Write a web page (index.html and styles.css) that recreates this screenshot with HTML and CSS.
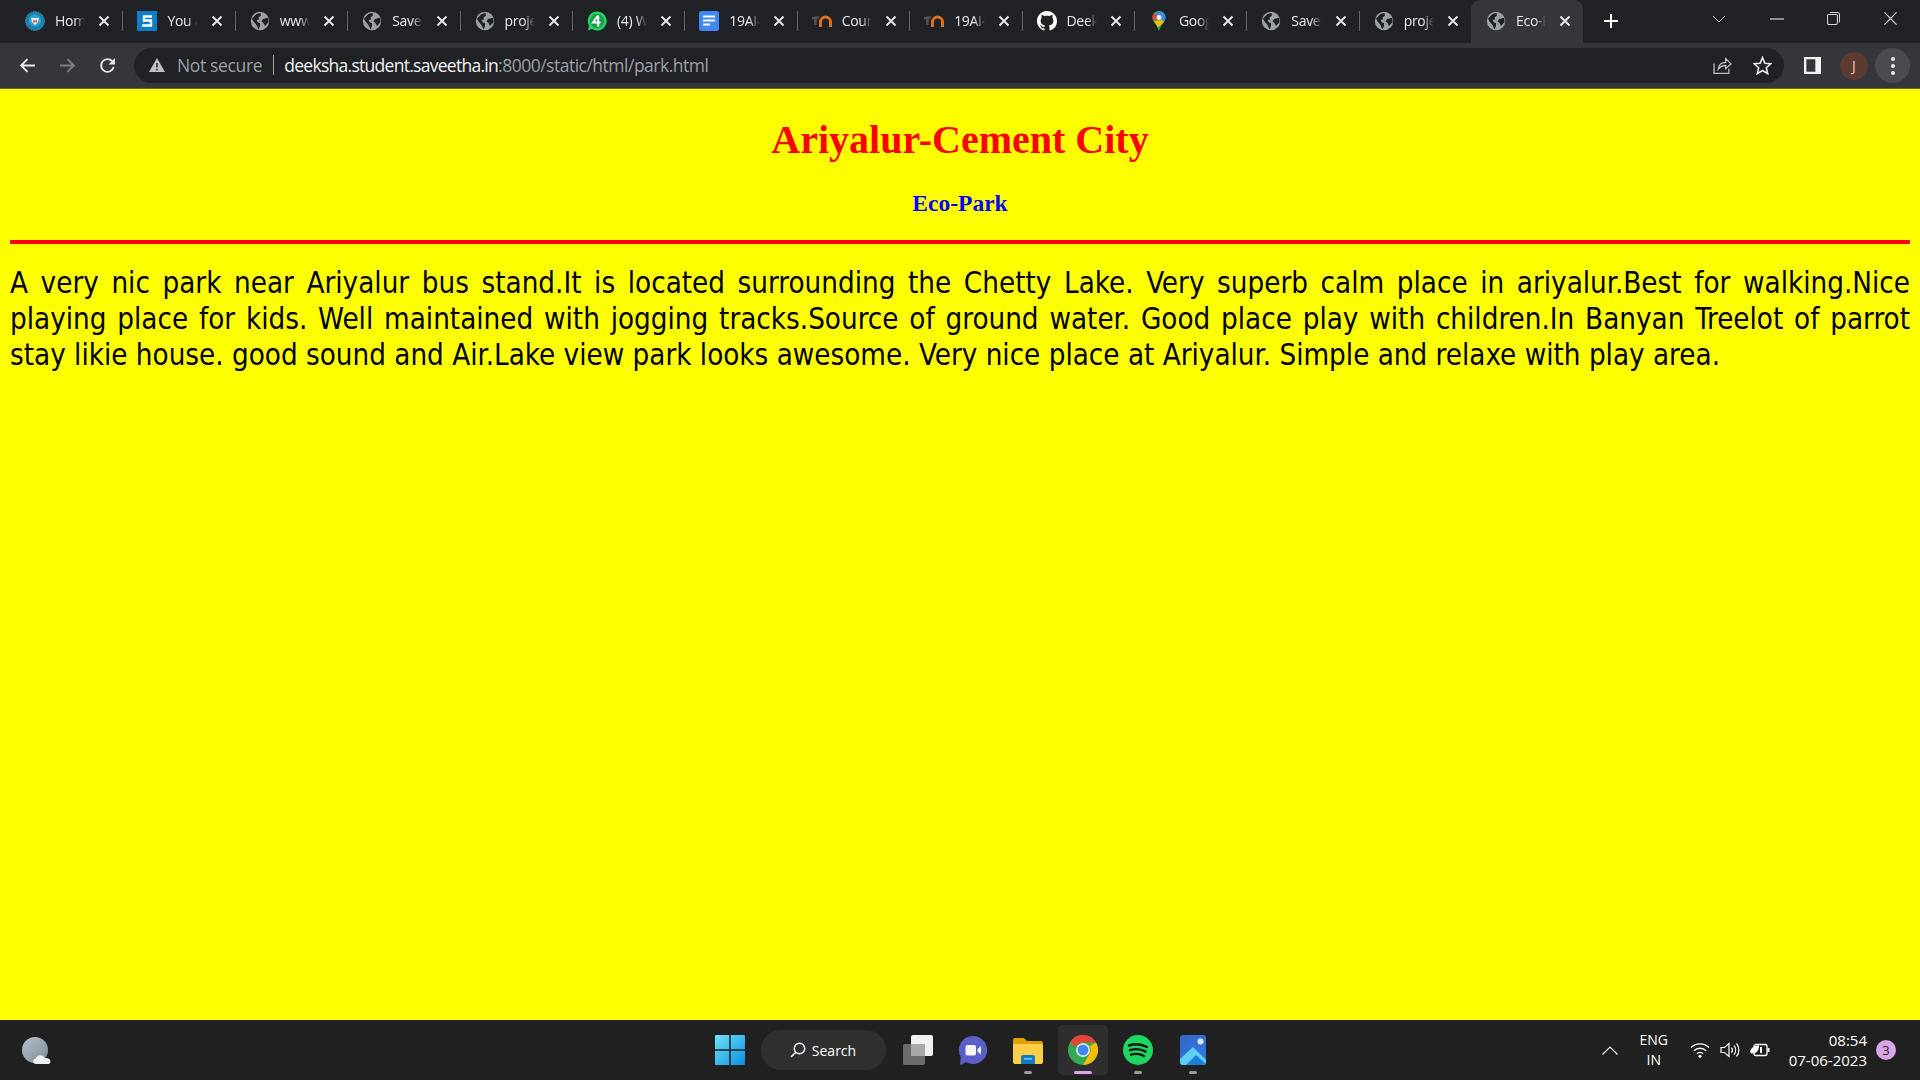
FILE: index.html
```html
<!DOCTYPE html>
<html lang="en">
<head>
<meta charset="utf-8">
<title>Eco-Park</title>
<link rel="stylesheet" href="styles.css">
</head>
<body>
<svg class="defs" width="0" height="0">
  <symbol id="globe" viewBox="0 0 20 20">
    <circle cx="10" cy="10" r="9.2" fill="#9aa0a6"/>
    <path d="M2 7.5 L6.5 3 L10.5 2 L11 4.5 L8.5 6.5 L9 8.5 L6.5 9 L8 11.5 L10 12 L10 15 L8.5 18.5 L6.5 14 L3.5 10.5Z" fill="#202124"/>
    <path d="M13 8 L18 6.8 L18.6 11 L15 15 L13.5 12 L11.5 10.5Z" fill="#202124"/>
  </symbol>
  <symbol id="close" viewBox="0 0 12 12">
    <path d="M1.5 1.5 L10.5 10.5 M10.5 1.5 L1.5 10.5" stroke="#e8eaed" stroke-width="1.9" fill="none"/>
  </symbol>
  <symbol id="moodle" viewBox="0 0 20 20">
    <path d="M8.5 16 V11 A5 5 0 0 1 18.5 11 V16" fill="none" stroke="#d9731a" stroke-width="3"/>
    <path d="M0 7.5 L7 6 M3.5 7 V14" fill="none" stroke="#55504c" stroke-width="2.6"/>
  </symbol>
</svg>
<header class="chrome">
  <div class="tabstrip">
    <div class="tab">
      <svg class="fav" viewBox="0 0 20 20"><circle cx="10" cy="10" r="9.5" fill="#1d7fae" stroke="#3a8f95" stroke-dasharray="1.5 1"/><circle cx="10" cy="9.5" r="6" fill="#2fa3d9"/><path d="M6 7 H14 L13 11 L10 14 L7 11Z" fill="#e6eef2"/><path d="M8 9 H12 V11.5 H8Z" fill="#e0734a"/></svg>
      <span class="title">Home</span><svg class="x"><use href="#close"/></svg>
    </div>
    <div class="tab">
      <svg class="fav" viewBox="0 0 20 20"><rect width="20" height="20" fill="#0f7ec8"/><path d="M15 5.5 H7 V9.5 H14 V14.5 H5" fill="none" stroke="#fff" stroke-width="2.4"/></svg>
      <span class="title">You are</span><svg class="x"><use href="#close"/></svg>
    </div>
    <div class="tab"><svg class="fav"><use href="#globe"/></svg><span class="title">www.</span><svg class="x"><use href="#close"/></svg></div>
    <div class="tab"><svg class="fav"><use href="#globe"/></svg><span class="title">Saved</span><svg class="x"><use href="#close"/></svg></div>
    <div class="tab"><svg class="fav"><use href="#globe"/></svg><span class="title">project</span><svg class="x"><use href="#close"/></svg></div>
    <div class="tab">
      <svg class="fav" viewBox="0 0 20 20"><path d="M10 .5 A9.5 9.5 0 1 1 5 18 L.8 19.3 L2.2 15 A9.5 9.5 0 0 1 10 .5Z" fill="#25d366"/><circle cx="10" cy="10" r="7.2" fill="#1a9e4a"/><path d="M11 4.5 L6 11.5 H13.5 M11.2 4.5 V15.5" fill="none" stroke="#fff" stroke-width="2"/></svg>
      <span class="title">(4) WhatsApp</span><svg class="x"><use href="#close"/></svg>
    </div>
    <div class="tab">
      <svg class="fav" viewBox="0 0 20 20"><rect width="20" height="20" rx="2.5" fill="#4285f4"/><path d="M4 5.5 H16 M4 9.5 H16 M4 13.5 H11" stroke="#fff" stroke-width="2"/></svg>
      <span class="title">19AI4</span><svg class="x"><use href="#close"/></svg>
    </div>
    <div class="tab"><svg class="fav"><use href="#moodle"/></svg><span class="title">Course</span><svg class="x"><use href="#close"/></svg></div>
    <div class="tab"><svg class="fav"><use href="#moodle"/></svg><span class="title">19AI4</span><svg class="x"><use href="#close"/></svg></div>
    <div class="tab">
      <svg class="fav" viewBox="0 0 16 16"><path fill="#fff" d="M8 0C3.58 0 0 3.58 0 8c0 3.54 2.29 6.53 5.47 7.59.4.07.55-.17.55-.38 0-.19-.01-.82-.01-1.49-2.01.37-2.53-.49-2.69-.94-.09-.23-.48-.94-.82-1.13-.28-.15-.68-.52-.01-.53.63-.01 1.08.58 1.23.82.72 1.21 1.87.87 2.33.66.07-.52.28-.87.51-1.07-1.78-.2-3.64-.89-3.64-3.95 0-.87.31-1.59.82-2.15-.08-.2-.36-1.02.08-2.12 0 0 .67-.21 2.2.82.64-.18 1.32-.27 2-.27s1.36.09 2 .27c1.53-1.04 2.2-.82 2.2-.82.44 1.1.16 1.92.08 2.12.51.56.82 1.27.82 2.15 0 3.07-1.87 3.75-3.65 3.95.29.25.54.73.54 1.48 0 1.07-.01 1.93-.01 2.2 0 .21.15.46.55.38A8.01 8.01 0 0 0 16 8c0-4.42-3.58-8-8-8z"/></svg>
      <span class="title">Deeksha</span><svg class="x"><use href="#close"/></svg>
    </div>
    <div class="tab">
      <svg class="fav" viewBox="0 0 20 20"><path d="M10 0 C5.8 0 3.5 3 3.5 6.5 C3.5 10.5 8 13.5 10 20 C12 13.5 16.5 10.5 16.5 6.5 C16.5 3 14.2 0 10 0Z" fill="#34a853"/><path d="M5 2 L15 11 C16 9.5 16.5 8 16.5 6.5 C16.5 3.5 14.5 1.5 13 .8Z" fill="#4285f4"/><path d="M5 2 C3.8 3.2 3.5 5 3.5 6.5 C3.5 8 4 9 4.7 10L9 5.5Z" fill="#ea4335"/><path d="M4.7 10 C6 12 8 14 8.8 16.5 L15 11 L13 9Z" fill="#fbbc04"/><circle cx="10" cy="6.5" r="2.4" fill="#fff"/></svg>
      <span class="title">Google</span><svg class="x"><use href="#close"/></svg>
    </div>
    <div class="tab"><svg class="fav"><use href="#globe"/></svg><span class="title">Saved</span><svg class="x"><use href="#close"/></svg></div>
    <div class="tab"><svg class="fav"><use href="#globe"/></svg><span class="title">project</span><svg class="x"><use href="#close"/></svg></div>
    <div class="tab active"><svg class="fav"><use href="#globe"/></svg><span class="title">Eco-Park</span><svg class="x"><use href="#close"/></svg></div>
    <svg class="newtab" viewBox="0 0 16 16"><path d="M8 1 V15 M1 8 H15" stroke="#fff" stroke-width="2"/></svg>
    <div class="wincontrols">
      <svg class="chev" viewBox="0 0 14 8"><path d="M1 1 L7 7 L13 1" fill="none" stroke="#bdc1c6" stroke-width="1"/></svg>
      <svg class="wbtn" viewBox="0 0 14 14"><path d="M0 7 H14" stroke="#d5d7da" stroke-width="1.2"/></svg>
      <svg class="wbtn" viewBox="0 0 14 14"><rect x=".6" y="2.6" width="10.6" height="10.8" rx="1.5" fill="none" stroke="#d5d7da" stroke-width="1.1"/><path d="M3 .6 H11.5 A2 2 0 0 1 13.4 2.6 V11" fill="none" stroke="#d5d7da" stroke-width="1.1"/></svg>
      <svg class="wbtn" viewBox="0 0 14 14"><path d="M.5 .5 L13.5 13.5 M13.5 .5 L.5 13.5" stroke="#e8eaed" stroke-width="1.1"/></svg>
    </div>
  </div>
  <div class="toolbar">
    <svg class="nav" viewBox="0 0 16 16"><path d="M15 8 H2 M8 2 L2 8 L8 14" fill="none" stroke="#e8eaed" stroke-width="1.8"/></svg>
    <svg class="nav" viewBox="0 0 16 16"><path d="M1 8 H14 M8 2 L14 8 L8 14" fill="none" stroke="#7d8085" stroke-width="1.8"/></svg>
    <svg class="nav" viewBox="0 0 16 16"><path d="M13.8 9.5 A6 6 0 1 1 12.3 3.8" fill="none" stroke="#e8eaed" stroke-width="1.8"/><path d="M15 1 V7 H9Z" fill="#e8eaed"/></svg>
    <div class="omnibox">
      <svg class="warn" viewBox="0 0 16 14"><path d="M8 0 L16 14 H0Z" fill="#bdc1c6"/><path d="M8 5 V9.5 M8 10.8 V12.4" stroke="#202124" stroke-width="1.4"/></svg>
      <span class="notsecure">Not secure</span>
      <span class="divider"></span>
      <span class="url"><span class="host">deeksha.student.saveetha.in</span>:8000/static/html/park.html</span>
      <svg class="omni-ico share" viewBox="0 0 18 18"><path d="M1 7 V16.5 H15 V12 M5 12.5 C5.5 8.5 8 6 12 6 V2.5 L17 7.5 L12 12 V9 C9 9 7 10 5 12.5Z" fill="none" stroke="#bdc1c6" stroke-width="1.2"/></svg>
      <svg class="omni-ico star" viewBox="0 0 18 18"><path d="M9 1.5 L11.2 6.8 L17 7.3 L12.6 11.1 L13.9 16.7 L9 13.7 L4.1 16.7 L5.4 11.1 L1 7.3 L6.8 6.8Z" fill="none" stroke="#e8eaed" stroke-width="1.5"/></svg>
    </div>
    <svg class="sidepanel" viewBox="0 0 18 18"><path fill-rule="evenodd" d="M0 0 H18 V18 H0Z M2.5 2.5 V15.5 H12 V2.5Z" fill="#f1f3f4"/></svg>
    <span class="avatar">J</span>
    <span class="menu"><i></i><i></i><i></i></span>
  </div>
</header>

<main class="page">
  <h1 class="city">Ariyalur-Cement City</h1>
  <h2 class="park">Eco-Park</h2>
  <hr class="rule">
  <p class="review">A very nic park near Ariyalur bus stand.It is located surrounding the Chetty Lake. Very superb calm place in ariyalur.Best for walking.Nice playing place for kids. Well maintained with jogging tracks.Source of ground water. Good place play with children.In Banyan Treelot of parrot stay likie house. good sound and Air.Lake view park looks awesome. Very nice place at Ariyalur. Simple and relaxe with play area.</p>
</main>

<footer class="taskbar">
  <svg class="weather" viewBox="0 0 30 28">
    <defs><linearGradient id="moon" x1="0" y1="0" x2="1" y2="1"><stop offset="0" stop-color="#b8c2cc"/><stop offset="1" stop-color="#7f8a96"/></linearGradient></defs>
    <circle cx="13" cy="13" r="13" fill="url(#moon)"/>
    <path d="M14 27 C10.5 27 10 22 14 21.5 C14.8 17.5 21 17 22.5 21 C26 20.5 28.5 22 28.5 24.5 C28.5 26.5 27 27 25 27Z" fill="#eef1f4"/>
  </svg>
  <div class="task-center">
    <svg class="start" viewBox="0 0 28 28">
      <defs><linearGradient id="win" x1="0" y1="0" x2="1" y2="1"><stop offset="0" stop-color="#6fe3ff"/><stop offset="1" stop-color="#0a8fdc"/></linearGradient></defs>
      <path d="M0 1 A1 1 0 0 1 1 0 H13.3 V13.3 H0Z M14.7 0 H27 A1 1 0 0 1 28 1 V13.3 H14.7Z M0 14.7 H13.3 V28 H1 A1 1 0 0 1 0 27Z M14.7 14.7 H28 V27 A1 1 0 0 1 27 28 H14.7Z" fill="url(#win)"/>
    </svg>
    <div class="search">
      <svg class="glass" viewBox="0 0 16 16"><circle cx="9.5" cy="6.5" r="5.2" fill="none" stroke="#fff" stroke-width="1.4"/><path d="M5.8 10.2 L1 15" stroke="#fff" stroke-width="1.6"/></svg>
      <span>Search</span>
    </div>
    <div class="app">
      <svg class="ico" viewBox="0 0 30 30"><rect x="0" y="9" width="22" height="21" rx="2" fill="#6b6b6b"/><rect x="8" y="0" width="22" height="21" rx="2" fill="#f2f2f2"/><rect x="8" y="9" width="14" height="12" fill="#a9a9a9"/></svg>
    </div>
    <div class="app">
      <svg class="ico" viewBox="0 0 30 30"><path d="M15 1 A14 14 0 1 1 8 27 L4 29.5 C3 30 2 29.5 2.2 28 L2.8 22 A14 14 0 0 1 15 1Z" fill="#5b5fc7"/><rect x="7.5" y="10" width="10.5" height="10.5" rx="2" fill="#f4f4fb"/><path d="M19.5 14 L23 11 V19.5 L19.5 16.5Z" fill="#f4f4fb"/></svg>
    </div>
    <div class="app open">
      <svg class="ico" viewBox="0 0 30 30"><path d="M0 5 A2 2 0 0 1 2 3 H11 L14 6 H28 A2 2 0 0 1 30 8 V12 H0Z" fill="#e0a100"/><path d="M0 9 H28 A2 2 0 0 1 30 11 V27 A2 2 0 0 1 28 29 H2 A2 2 0 0 1 0 27Z" fill="#ffcf49"/><path d="M8 22 A2 2 0 0 1 10 20 H20 A2 2 0 0 1 22 22 V29 H8Z" fill="#1279c4"/><rect x="11" y="23" width="8" height="1.6" fill="#7ec8f5"/></svg>
      <span class="pip"></span>
    </div>
    <div class="app current">
      <svg class="ico" viewBox="0 0 48 48"><circle cx="24" cy="24" r="24" fill="#34a853"/><path d="M24 0 A24 24 0 0 1 44.8 12 H24 A12 12 0 0 0 13.2 19 L3.2 12 A24 24 0 0 1 24 0Z" fill="#ea4335"/><path d="M44.8 12 A24 24 0 0 1 24 48 L34.4 30 A12 12 0 0 0 34.4 18 Z" fill="#fbbc04"/><circle cx="24" cy="24" r="11" fill="#fff"/><circle cx="24" cy="24" r="8.8" fill="#4285f4"/></svg>
      <span class="pip wide"></span>
    </div>
    <div class="app open">
      <svg class="ico" viewBox="0 0 30 30"><circle cx="15" cy="15" r="15" fill="#1ed760"/><path d="M6 10.5 C12 8.5 18.5 9 24 12 M7 15.2 C12 13.5 18 14 22.5 16.6 M8 19.6 C12.5 18.3 17 18.7 21 21" fill="none" stroke="#191414" stroke-width="2.4" stroke-linecap="round"/></svg>
      <span class="pip"></span>
    </div>
    <div class="app open">
      <svg class="ico" viewBox="0 0 30 30"><defs><linearGradient id="ph" x1="0" y1="0" x2="1" y2="1"><stop offset="0" stop-color="#3566c8"/><stop offset="1" stop-color="#2a7fe0"/></linearGradient></defs><rect x="2" width="26" height="30" rx="3" fill="url(#ph)"/><path d="M2 24 L15 12 L28 25 V27 A3 3 0 0 1 25 30 H5 A3 3 0 0 1 2 27Z" fill="#5fd0f5"/><path d="M8 30 L18 20 L28 29 L26 30Z" fill="#1b7fd8"/><circle cx="22.5" cy="6.5" r="3" fill="#e9e4f5"/></svg>
      <span class="pip"></span>
    </div>
  </div>
  <div class="tray">
    <svg class="caret" viewBox="0 0 16 9"><path d="M.5 8.5 L8 1 L15.5 8.5" fill="none" stroke="#eee" stroke-width="1.2"/></svg>
    <div class="lang"><span>ENG</span><span>IN</span></div>
    <svg class="tray-ico" viewBox="0 0 20 16"><path d="M1 5.5 A13 13 0 0 1 19 5.5 M4 8.7 A8.5 8.5 0 0 1 16 8.7 M7 11.7 A4 4 0 0 1 13 11.7" fill="none" stroke="#fff" stroke-width="1.4"/><circle cx="10" cy="14.3" r="1.5" fill="#fff"/></svg>
    <svg class="tray-ico" viewBox="0 0 20 16"><path d="M1 5.5 H4.5 L9 1.5 V14.5 L4.5 10.5 H1Z" fill="none" stroke="#fff" stroke-width="1.2"/><path d="M11.5 5.5 A4 4 0 0 1 11.5 10.5 M14 3.5 A7 7 0 0 1 14 12.5 M16.5 1.5 A10 10 0 0 1 16.5 14.5" fill="none" stroke="#fff" stroke-width="1.2"/></svg>
    <svg class="tray-ico" viewBox="0 0 20 16"><rect x="4" y="2.5" width="13" height="11" rx="2" fill="none" stroke="#fff" stroke-width="1.3"/><rect x="17.5" y="6" width="2" height="4" fill="#fff"/><path d="M0 10 C1 5 5 3.5 9 3.5 C9 9 6 12 1.5 11.5Z" fill="#fff"/><rect x="10" y="5" width="2" height="6" fill="#fff"/></svg>
    <div class="clock"><span>08:54</span><span>07-06-2023</span></div>
    <span class="badge">3</span>
  </div>
</footer>
</body>
</html>
```
FILE: styles.css
```css
* { box-sizing: border-box; }
html, body { margin: 0; height: 100%; }
body { display: flex; flex-direction: column; height: 100vh; overflow: hidden; background: #ff0; }
.defs { position: absolute; }

.chrome { flex: none; height: 89px; background: #202124; font-family: "Open Sans", "Noto Sans", sans-serif; }
.tabstrip { height: 43px; padding-left: 10px; display: flex; align-items: center; }
.tab { position: relative; flex: none; width: 112.4px; height: 43px; padding: 0 12px 2px 15px; display: flex; align-items: center; color: #e8eaed; font-size: 14px; }
.tab + .tab::before { content: ""; position: absolute; left: 0; top: 11px; height: 20px; width: 1px; background: #62646a; }
.tab.active { background: #35363a; border-radius: 9px 9px 0 0; }
.tab.active::before { display: none; }
.fav { flex: none; width: 20px; height: 20px; margin-right: 10px; }
.title { flex: 1; min-width: 0; overflow: hidden; white-space: nowrap; margin-right: 13px; letter-spacing: -0.3px; -webkit-mask-image: linear-gradient(90deg, #000 65%, transparent 100%); mask-image: linear-gradient(90deg, #000 65%, transparent 100%); }
.x { flex: none; width: 12px; height: 12px; }
.newtab { flex: none; width: 16px; height: 16px; margin: 0 0 2px 20px; }
.wincontrols { margin-left: auto; display: flex; align-items: center; height: 43px; padding-bottom: 6px; }
.chev { width: 14px; height: 8px; margin-right: 44px; }
.wbtn { width: 14px; height: 14px; margin-right: 43px; }
.wbtn:nth-child(3) { width: 13px; height: 13px; margin-right: 44px; }
.wbtn:last-child { width: 13px; height: 13px; margin-right: 23px; }

.toolbar { height: 46px; background: #35363a; border-bottom: 1px solid #5f6064; display: flex; align-items: center; padding-left: 19px; }
.nav { flex: none; width: 17px; height: 17px; margin-right: 23px; }
.nav:nth-child(3) { margin-right: 18px; }
.omnibox { flex: none; width: 1650px; height: 35px; padding: 0 0 1px 15px; border-radius: 18px; background: #202124; display: flex; align-items: center; font-size: 17.5px; letter-spacing: -0.35px; }
.warn { flex: none; width: 16px; height: 14px; margin-right: 12px; }
.notsecure { color: #9aa0a6; }
.divider { width: 1px; height: 20px; background: #9aa0a6; margin: 0 10.5px; }
.url { color: #9aa0a6; flex: 1; white-space: nowrap; letter-spacing: -0.5px; }
.host { color: #f1f3f4; letter-spacing: -0.72px; }
.omni-ico { flex: none; width: 19px; height: 19px; }
.share { margin-right: 21px; }
.star { margin-right: 12px; }
.sidepanel { flex: none; width: 17px; height: 17px; margin-left: 20px; }
.avatar { flex: none; width: 28px; height: 28px; border-radius: 50%; margin-left: 19px; background: #5d3a30; color: #e8c8bb; font-size: 14px; display: flex; align-items: center; justify-content: center; }
.menu { flex: none; width: 35px; height: 35px; border-radius: 18px; margin-left: 7px; background: #4a4b4f; display: flex; flex-direction: column; align-items: center; justify-content: center; gap: 3px; }
.menu i { width: 4px; height: 4px; border-radius: 50%; background: #e8eaed; }

.page { flex: 1; min-height: 0; padding: 0 10px; background: #ff0; }
.city { margin: 28px 0 0; text-align: center; color: #f00; font: bold 40px/46px "Liberation Serif", serif; }
.park { margin: 27px 0 0; text-align: center; color: #00f; font: bold 23.5px/27px "Liberation Serif", serif; }
.rule { margin: 23px 0 0; height: 4px; border: 0; background: #f00; }
.review { margin: 21px 0 0; color: #000; text-align: justify; font: 29.27px/36px "DejaVu Sans Condensed", "DejaVu Sans", sans-serif; font-stretch: condensed; }

.taskbar { position: relative; flex: none; height: 60px; background: #202020; display: flex; align-items: center; color: #fff; font-family: "Open Sans", "Noto Sans", sans-serif; }
.weather { position: absolute; left: 22px; top: 17px; width: 30px; height: 28px; }
.task-center { position: absolute; left: 714.5px; top: 0; height: 60px; display: flex; align-items: center; }
.start { flex: none; width: 30px; height: 30px; margin-right: 16px; }
.search { flex: none; width: 125px; height: 40px; border-radius: 20px; background: #2f2f2f; display: flex; align-items: center; justify-content: center; gap: 6px; font-size: 14px; margin-right: 7.5px; }
.glass { width: 16px; height: 16px; }
.app { position: relative; flex: none; width: 50px; height: 50px; margin-right: 5px; border-radius: 5px; display: flex; align-items: center; justify-content: center; }
.ico { width: 30px; height: 30px; }
.app.current { background: #2e2e2e; }
.pip { position: absolute; bottom: 1px; left: 50%; width: 8px; height: 3px; margin-left: -4px; border-radius: 2px; background: #9a9a9a; }
.pip.wide { width: 18px; margin-left: -9px; background: #dba6e6; }
.tray { margin-left: auto; display: flex; align-items: center; font-size: 14px; }
.caret { width: 16px; height: 9px; margin-right: 20px; }
.lang { width: 32px; display: flex; flex-direction: column; align-items: center; line-height: 20px; margin-right: 20px; }
.tray-ico { width: 20px; height: 16px; margin-right: 10px; }
.clock { display: flex; flex-direction: column; align-items: flex-end; line-height: 20px; margin-left: 9px; font-size: 15px; }
.badge { width: 20px; height: 20px; margin: 0 24px 0 9px; border-radius: 50%; background: #dba6e6; color: #202020; font-size: 13px; display: flex; align-items: center; justify-content: center; }
```
